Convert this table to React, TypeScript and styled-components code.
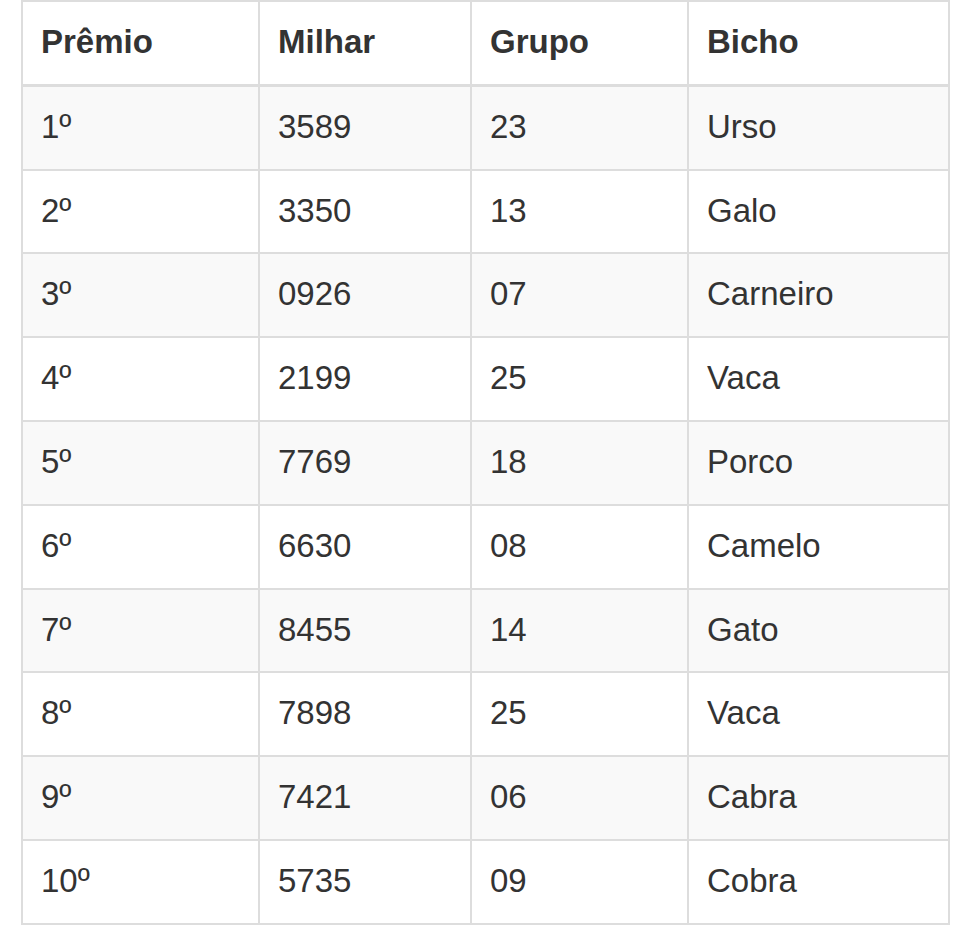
import styled, { createGlobalStyle } from "styled-components";

const GlobalStyle = createGlobalStyle`
  body {
    margin: 0;
    background: #fff;
    font-family: "Liberation Sans", Arial, Helvetica, sans-serif;
    color: #333;
  }
`;

const Page = styled.div`
  padding-left: 21px;
`;

const Table = styled.table`
  border-collapse: collapse;
  border-spacing: 0;
  width: 927px;
  table-layout: fixed;
  border: 2px solid #ddd;
  font-size: 33px;
  line-height: 45.8px;
`;

const Col = styled.col<{ $width: number }>`
  width: ${(p) => p.$width}px;
`;

const HeadCell = styled.th`
  text-align: left;
  font-weight: bold;
  padding: 17px 18px 19px;
  border: 2px solid #ddd;
  border-bottom-width: 3px;
  vertical-align: bottom;
`;

const Row = styled.tr<{ $striped: boolean }>`
  background: ${(p) => (p.$striped ? "#f9f9f9" : "#fff")};
`;

const Cell = styled.td`
  padding: 17px 18px 19px;
  border: 2px solid #ddd;
  vertical-align: top;
`;

const columns = [
  { label: "Prêmio", width: 237 },
  { label: "Milhar", width: 212 },
  { label: "Grupo", width: 217 },
  { label: "Bicho", width: 261 },
];

const results = [
  ["1º", "3589", "23", "Urso"],
  ["2º", "3350", "13", "Galo"],
  ["3º", "0926", "07", "Carneiro"],
  ["4º", "2199", "25", "Vaca"],
  ["5º", "7769", "18", "Porco"],
  ["6º", "6630", "08", "Camelo"],
  ["7º", "8455", "14", "Gato"],
  ["8º", "7898", "25", "Vaca"],
  ["9º", "7421", "06", "Cabra"],
  ["10º", "5735", "09", "Cobra"],
];

export default function App() {
  return (
    <Page>
      <GlobalStyle />
      <Table>
        <colgroup>
          {columns.map((c) => (
            <Col key={c.label} $width={c.width} />
          ))}
        </colgroup>
        <thead>
          <tr>
            {columns.map((c) => (
              <HeadCell key={c.label}>{c.label}</HeadCell>
            ))}
          </tr>
        </thead>
        <tbody>
          {results.map((row, i) => (
            <Row key={row[0]} $striped={i % 2 === 0}>
              {row.map((value, j) => (
                <Cell key={j}>{value}</Cell>
              ))}
            </Row>
          ))}
        </tbody>
      </Table>
    </Page>
  );
}
